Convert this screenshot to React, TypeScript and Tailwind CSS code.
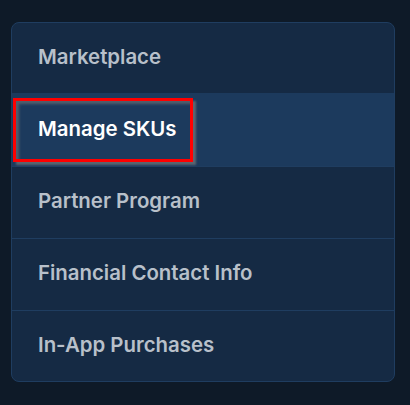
import React from "react";

const items = [
  { label: "Marketplace", h: "h-[70px]", border: false },
  { label: "Manage SKUs", h: "h-[74px]", border: true },
  { label: "Partner Program", h: "h-[72px]", border: true },
  { label: "Financial Contact Info", h: "h-[72px]", border: true },
  { label: "In-App Purchases", h: "h-[70px]", border: false },
];

export default function App() {
  return (
    <div className="w-[410px] h-[405px] bg-[#0e1a28] pt-[22px] pl-[11px]" style={{ fontFamily: 'Inter, "Liberation Sans", sans-serif' }}>
      <div className="w-[384px] rounded-[8px] border border-[#1f3d60] bg-[#152a44] overflow-hidden flex flex-col">
        {items.map((it, i) => {
          const active = i === 1;
          return (
            <div
              key={it.label}
              className={
                it.h +
                " flex items-center " +
                (it.border ? "border-b border-[#1f3d60] " : "") +
                (active ? "bg-[#1c3a5d]" : "")
              }
            >
              {active ? (
                <div className="ml-[1px] h-[64px] w-[180px] border-[3px] border-[#ff0000] flex items-center pl-[22px] shadow-[3px_3px_2px_rgba(120,120,120,0.7),inset_3px_3px_3px_rgba(120,120,120,0.6)]">
                  <span className="text-[20.4px] font-semibold text-white">{it.label}</span>
                </div>
              ) : (
                <span className="ml-[26px] -mt-[2px] text-[20.4px] font-semibold text-[#b8c0ca]">{it.label}</span>
              )}
            </div>
          );
        })}
      </div>
    </div>
  );
}
